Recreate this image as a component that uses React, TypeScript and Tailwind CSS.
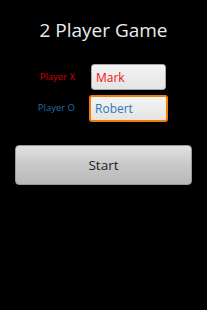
export default function App() {
  return (
    <div
      className="w-[207px] h-[310px] bg-black flex flex-col"
      style={{ fontFamily: '"Open Sans", "Noto Sans", sans-serif' }}
    >
      <h1 className="text-center text-[19px] leading-[26px] text-[#ececec] pt-[17px]">
        2 Player Game
      </h1>

      <div className="grid grid-cols-[75px_75px] gap-x-[16px] gap-y-[5px] mt-[21px] items-center">
        <span className="text-right text-[9.5px] text-[#d40000]">Player X</span>
        <div className="h-[26px] rounded-[3px] border border-[#a8a8a8] bg-gradient-to-b from-[#f4f4f4] to-[#e4e4e4] flex items-center pl-[4px] pt-[1px] text-[12px] text-[#f01010]">
          Mark
        </div>
        <span className="text-right text-[9.5px] text-[#1e6fae]">Player O</span>
        <div className="-mx-[2px] h-[27px] rounded-[3px] border-2 border-[#f07c0a] bg-gradient-to-b from-[#f4f4f4] to-[#e4e4e4] flex items-center pl-[4px] text-[12px] text-[#2a78b8]">
          Robert
        </div>
      </div>

      <div className="px-[15px] mt-[23px]">
        <button className="w-full h-[40px] rounded-[4px] bg-gradient-to-b from-[#e2e2e2] via-[#c8c8c8] to-[#b8b8b8] border border-[#9a9a9a] text-[13.5px] text-[#1e1e1e]">
          Start
        </button>
      </div>
    </div>
  );
}
